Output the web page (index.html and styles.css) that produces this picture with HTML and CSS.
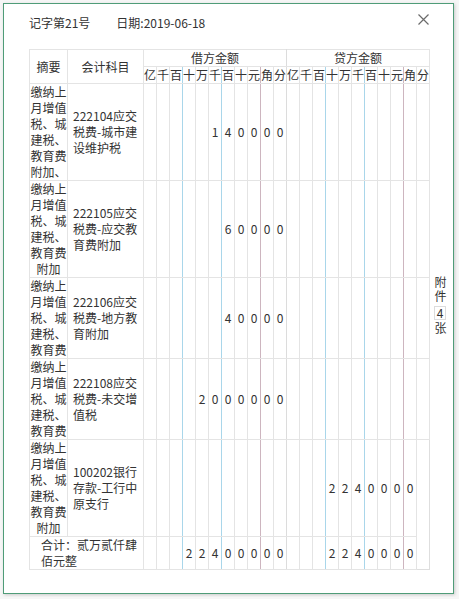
FILE: index.html
```html
<!DOCTYPE html>
<html lang="zh-CN">
<head>
<meta charset="utf-8">
<title>记账凭证</title>
<link rel="stylesheet" href="styles.css">
</head>
<body>
<div class="dialog">
  <button class="close" aria-label="关闭">
    <svg width="11" height="11" viewBox="0 0 11 11"><path d="M0.5 0.5L10.5 10.5M10.5 0.5L0.5 10.5" stroke="#6b6b6b" stroke-width="1.2" fill="none"/></svg>
  </button>
  <div class="head">
    <span>记字第21号</span>
    <span>日期:2019-06-18</span>
  </div>
  <div class="content">
    <table class="voucher">
      <colgroup>
        <col class="c-sum"><col class="c-acc">
        <col><col><col><col><col><col><col><col><col><col><col>
        <col><col><col><col><col><col><col><col><col><col><col>
      </colgroup>
      <thead>
        <tr class="h1">
          <th rowspan="2">摘要</th>
          <th rowspan="2">会计科目</th>
          <th colspan="11" class="debit">借方金额</th>
          <th colspan="11">贷方金额</th>
        </tr>
        <tr class="h2">
          <th>亿</th><th>千</th><th>百</th><th>十</th><th>万</th><th>千</th><th>百</th><th>十</th><th>元</th><th>角</th><th>分</th>
          <th>亿</th><th>千</th><th>百</th><th>十</th><th>万</th><th>千</th><th>百</th><th>十</th><th>元</th><th>角</th><th>分</th>
        </tr>
      </thead>
      <tbody>
        <tr class="row">
          <td class="sum">缴纳上月增值税、城建税、教育费附加、</td>
          <td class="acc">222104应交税费-城市建设维护税</td>
          <td></td><td></td><td></td><td></td><td></td><td>1</td><td>4</td><td>0</td><td>0</td><td>0</td><td>0</td>
          <td></td><td></td><td></td><td></td><td></td><td></td><td></td><td></td><td></td><td></td><td></td>
        </tr>
        <tr class="row">
          <td class="sum">缴纳上月增值税、城建税、教育费附加</td>
          <td class="acc">222105应交税费-应交教育费附加</td>
          <td></td><td></td><td></td><td></td><td></td><td></td><td>6</td><td>0</td><td>0</td><td>0</td><td>0</td>
          <td></td><td></td><td></td><td></td><td></td><td></td><td></td><td></td><td></td><td></td><td></td>
        </tr>
        <tr class="row">
          <td class="sum">缴纳上月增值税、城建税、教育费</td>
          <td class="acc">222106应交税费-地方教育附加</td>
          <td></td><td></td><td></td><td></td><td></td><td></td><td>4</td><td>0</td><td>0</td><td>0</td><td>0</td>
          <td></td><td></td><td></td><td></td><td></td><td></td><td></td><td></td><td></td><td></td><td></td>
        </tr>
        <tr class="row">
          <td class="sum">缴纳上月增值税、城建税、教育费</td>
          <td class="acc">222108应交税费-未交增值税</td>
          <td></td><td></td><td></td><td></td><td>2</td><td>0</td><td>0</td><td>0</td><td>0</td><td>0</td><td>0</td>
          <td></td><td></td><td></td><td></td><td></td><td></td><td></td><td></td><td></td><td></td><td></td>
        </tr>
        <tr class="row">
          <td class="sum">缴纳上月增值税、城建税、教育费附加</td>
          <td class="acc">100202银行存款-工行中原支行</td>
          <td></td><td></td><td></td><td></td><td></td><td></td><td></td><td></td><td></td><td></td><td></td>
          <td></td><td></td><td></td><td>2</td><td>2</td><td>4</td><td>0</td><td>0</td><td>0</td><td>0</td>
        </tr>
        <tr class="total">
          <td colspan="2" class="total-label">合计：贰万贰仟肆佰元整</td>
          <td></td><td></td><td></td><td>2</td><td>2</td><td>4</td><td>0</td><td>0</td><td>0</td><td>0</td><td>0</td>
          <td></td><td></td><td></td><td>2</td><td>2</td><td>4</td><td>0</td><td>0</td><td>0</td><td>0</td>
        </tr>
      </tbody>
    </table>
    <div class="attach">
      <span class="vtext">附件</span>
      <span class="num">4</span>
      <span class="vtext">张</span>
    </div>
  </div>
</div>
</body>
</html>
```

FILE: styles.css
```css
html, body {
  margin: 0;
  padding: 0;
}
body {
  background: #f6f6f6;
  font-family: "Noto Sans CJK SC", "Microsoft YaHei", sans-serif;
  font-size: 12px;
  color: #333;
}
.dialog {
  position: relative;
  margin: 3px;
  width: 449px;
  height: 589px;
  border: 1px solid #4f9c78;
  background: #fff;
  box-shadow: 1px 1px 3px rgba(0, 0, 0, 0.18);
}
.close {
  position: absolute;
  top: 10px;
  right: 24px;
  width: 11px;
  height: 11px;
  padding: 0;
  border: 0;
  background: none;
  line-height: 0;
}
.head {
  display: flex;
  gap: 26px;
  padding: 11px 0 0 25px;
  line-height: 16px;
}
.content {
  display: flex;
  margin: 18px 0 0 25px;
}
.voucher {
  width: 400px;
  table-layout: fixed;
  border-collapse: collapse;
  border: 1px solid #dedede;
}
.voucher col { width: 13px; }
.voucher col.c-sum { width: 38px; }
.voucher col.c-acc { width: 76px; }
.voucher th,
.voucher td {
  border: 1px solid #e4e4e4;
  padding: 0;
  line-height: 16px;
  font-weight: normal;
  text-align: center;
  vertical-align: middle;
  white-space: nowrap;
}
.voucher td.sum {
  white-space: normal;
  vertical-align: top;
}
.voucher td.acc {
  white-space: normal;
  text-align: left;
  padding: 0 3px 0 5px;
}
.voucher td.total-label {
  white-space: normal;
  text-align: left;
  padding: 0 2px 0 11px;
}
/* column separators: thousands (blue), decimal (red), debit/credit (grey) */
.h1 th.debit { border-right-color: #dcdcdc; }
.h2 th:nth-child(3), .h2 th:nth-child(6),
.h2 th:nth-child(14), .h2 th:nth-child(17) { border-right-color: #a9d6ea; }
.h2 th:nth-child(9), .h2 th:nth-child(20) { border-right-color: #cdb5bf; }
.h2 th:nth-child(11) { border-right-color: #dcdcdc; }

.row td:nth-child(5), .row td:nth-child(8),
.row td:nth-child(16), .row td:nth-child(19) { border-right-color: #a9d6ea; }
.row td:nth-child(11), .row td:nth-child(22) { border-right-color: #cdb5bf; }
.row td:nth-child(13) { border-right-color: #dcdcdc; }

.total td:nth-child(4), .total td:nth-child(7),
.total td:nth-child(15), .total td:nth-child(18) { border-right-color: #a9d6ea; }
.total td:nth-child(10), .total td:nth-child(21) { border-right-color: #cdb5bf; }
.total td:nth-child(12) { border-right-color: #dcdcdc; }

.attach {
  flex: 1;
  display: flex;
  flex-direction: column;
  align-items: center;
  justify-content: center;
  gap: 2px;
  padding-right: 3px;
  padding-bottom: 8px;
}
.attach .vtext {
  writing-mode: vertical-rl;
  letter-spacing: 2px;
  line-height: 14px;
}
.attach .num {
  width: 10px;
  height: 12px;
  line-height: 12px;
  text-align: center;
  border: 1px solid #dcdcdc;
}
```
